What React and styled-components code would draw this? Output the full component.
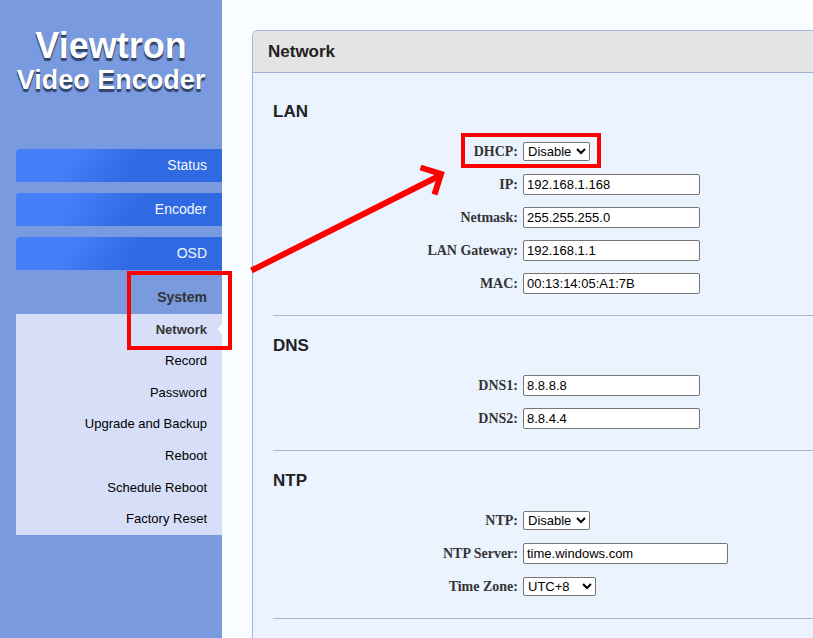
// App.jsx
import React from "react";
import styled, { createGlobalStyle, css } from "styled-components";

const GlobalStyle = createGlobalStyle`
  * {
    box-sizing: border-box;
  }

  body {
    margin: 0;
    background: #fafdff;
    font-family: "Liberation Sans", Arial, sans-serif;
    color: #222;
  }
`;

// Layout
const Page = styled.div`
  position: relative;
  display: flex;
  min-height: 100vh;
  overflow: hidden;
`;

const Sidebar = styled.aside`
  flex: 0 0 222px;
  background: #7a9ae0;
`;

const Main = styled.main`
  flex: 1;
  min-width: 0;
  display: flex;
  padding: 30px 0 0 30px;
`;

// Sidebar
const Logo = styled.h1`
  margin: 0;
  padding: 26px 0 55px;
  color: #fff;
  font-size: 36px;
  line-height: 40px;
  text-align: center;
  text-shadow: 0 1px 0 #34456b, 0 2px 0 #34456b, 0 3px 1px #34456b;
`;

const LogoLine = styled.span`
  display: block;
  font-size: 27px;
  line-height: 28px;
`;

const Menu = styled.nav`
  display: flex;
  flex-direction: column;
  gap: 11px;
  padding-left: 16px;
`;

const MenuLink = styled.a`
  display: block;
  padding-right: 15px;
  font-size: 14px;
  line-height: 33px;
  text-align: right;
  text-decoration: none;
  ${({ $open }) =>
    $open
      ? css`
          color: #333;
          font-weight: bold;
        `
      : css`
          color: #f4f8ff;
          border-top-left-radius: 4px;
          background: linear-gradient(
            125deg,
            #4580fa 25%,
            #2f6ae3 58%,
            #2f6ae3 100%
          );
        `}
`;

const SubMenu = styled.ul`
  display: grid;
  grid-auto-rows: 1fr;
  min-height: 221px;
  margin: 0;
  padding: 0;
  list-style: none;
  background: #d7dff8;
`;

const SubItem = styled.li`
  position: relative;
  display: flex;
  align-items: center;
  justify-content: flex-end;
  padding-right: 15px;
  ${({ $active }) =>
    $active &&
    css`
      &::after {
        content: "";
        position: absolute;
        right: 0;
        top: 10px;
        border: 5px solid transparent;
        border-left: 0;
        border-right-color: #fafdff;
      }
    `}
`;

const SubLink = styled.a`
  color: ${({ $active }) => ($active ? "#333" : "#000")};
  font-size: 13px;
  font-weight: ${({ $active }) => ($active ? "bold" : "normal")};
  line-height: 16px;
  text-decoration: none;
`;

// Settings panel
const Panel = styled.section`
  flex: 1;
  border: 1px solid #a0b4d8;
  border-right: 0;
  border-bottom: 0;
  border-top-left-radius: 6px;
  background: #ebf3ff;
  overflow: hidden;
`;

const PanelTitle = styled.h2`
  margin: 0;
  padding-left: 15px;
  border-bottom: 1px solid #a0b4d8;
  background: #e4e4e4;
  font-size: 17px;
  line-height: 41px;
`;

const PanelBody = styled.form`
  padding: 9px 0 0 20px;
`;

const Group = styled.fieldset`
  min-width: 0;
  margin: 0;
  padding: 0 0 15px;
  border: 0;
  border-bottom: 1px solid #adb5c7;
`;

const GroupTitle = styled.legend`
  padding: 20px 0 13px;
  font-size: 17px;
  font-weight: bold;
  line-height: 20px;
`;

const Row = styled.div`
  display: grid;
  grid-template-columns: 245px auto;
  column-gap: 5px;
  align-items: center;
  justify-content: start;
  justify-items: start;
  height: 33px;
`;

const Label = styled.label`
  justify-self: end;
  color: #333;
  font-family: "Liberation Serif", "Times New Roman", serif;
  font-size: 14px;
  font-weight: bold;
  line-height: 16px;
`;

const controlStyle = css`
  border: 1px solid #767676;
  border-radius: 2px;
  background: #fff;
  color: #000;
  font-family: "Liberation Sans", Arial, sans-serif;
  font-size: 13px;
`;

const TextInput = styled.input`
  ${controlStyle}
  width: ${({ $wide }) => ($wide ? "205px" : "177px")};
  height: 21px;
  padding: 1px 3px;
`;

const Select = styled.select`
  ${controlStyle}
  width: ${({ $wide }) => ($wide ? "73px" : "67px")};
  height: 19px;
  padding: 0;
`;

// Callouts laid over the page
const Outline = styled.div`
  position: absolute;
  left: ${({ $x }) => $x}px;
  top: ${({ $y }) => $y}px;
  width: ${({ $w }) => $w}px;
  height: ${({ $h }) => $h}px;
  border: 4px solid #f00;
  pointer-events: none;
`;

const Arrow = styled.svg`
  position: absolute;
  left: 240px;
  top: 150px;
  pointer-events: none;
`;

const subItems = [
  "Network",
  "Record",
  "Password",
  "Upgrade and Backup",
  "Reboot",
  "Schedule Reboot",
  "Factory Reset",
];

const groups = [
  {
    title: "LAN",
    fields: [
      { id: "dhcp", label: "DHCP", options: ["Disable", "Enable"] },
      { id: "ip", label: "IP", value: "192.168.1.168" },
      { id: "netmask", label: "Netmask", value: "255.255.255.0" },
      { id: "gateway", label: "LAN Gateway", value: "192.168.1.1" },
      { id: "mac", label: "MAC", value: "00:13:14:05:A1:7B" },
    ],
  },
  {
    title: "DNS",
    fields: [
      { id: "dns1", label: "DNS1", value: "8.8.8.8" },
      { id: "dns2", label: "DNS2", value: "8.8.4.4" },
    ],
  },
  {
    title: "NTP",
    fields: [
      { id: "ntp", label: "NTP", options: ["Disable", "Enable"] },
      {
        id: "ntp-server",
        label: "NTP Server",
        value: "time.windows.com",
        wide: true,
      },
      { id: "time-zone", label: "Time Zone", options: ["UTC+8"], wide: true },
    ],
  },
];

const Field = ({ id, label, value, options, wide }) => (
  <Row>
    <Label htmlFor={id}>{label}:</Label>
    {options ? (
      <Select id={id} $wide={wide}>
        {options.map((option) => (
          <option key={option}>{option}</option>
        ))}
      </Select>
    ) : (
      <TextInput id={id} type="text" defaultValue={value} $wide={wide} />
    )}
  </Row>
);

// Main Component
const App = () => {
  return (
    <Page>
      <GlobalStyle />
      <Sidebar>
        <Logo>
          Viewtron
          <LogoLine>Video Encoder</LogoLine>
        </Logo>
        <Menu>
          <MenuLink href="#status">Status</MenuLink>
          <MenuLink href="#encoder">Encoder</MenuLink>
          <MenuLink href="#osd">OSD</MenuLink>
          <div>
            <MenuLink href="#system" $open>
              System
            </MenuLink>
            <SubMenu>
              {subItems.map((item, i) => (
                <SubItem key={item} $active={i === 0}>
                  <SubLink href="#system" $active={i === 0}>
                    {item}
                  </SubLink>
                </SubItem>
              ))}
            </SubMenu>
          </div>
        </Menu>
      </Sidebar>
      <Main>
        <Panel>
          <PanelTitle>Network</PanelTitle>
          <PanelBody>
            {groups.map((group) => (
              <Group key={group.title}>
                <GroupTitle>{group.title}</GroupTitle>
                {group.fields.map((field) => (
                  <Field key={field.id} {...field} />
                ))}
              </Group>
            ))}
          </PanelBody>
        </Panel>
      </Main>
      <Outline $x={127} $y={271} $w={105} $h={79} />
      <Outline $x={461} $y={133} $w={140} $h={35} />
      <Arrow width="220" height="130" viewBox="0 0 220 130" fill="none">
        <path d="M11.5 120.5 199 26" stroke="#f00" strokeWidth="6" />
        <path d="M180.5 17.5 201 24 194.5 44.5" stroke="#f00" strokeWidth="6" />
      </Arrow>
    </Page>
  );
};

export default App;
